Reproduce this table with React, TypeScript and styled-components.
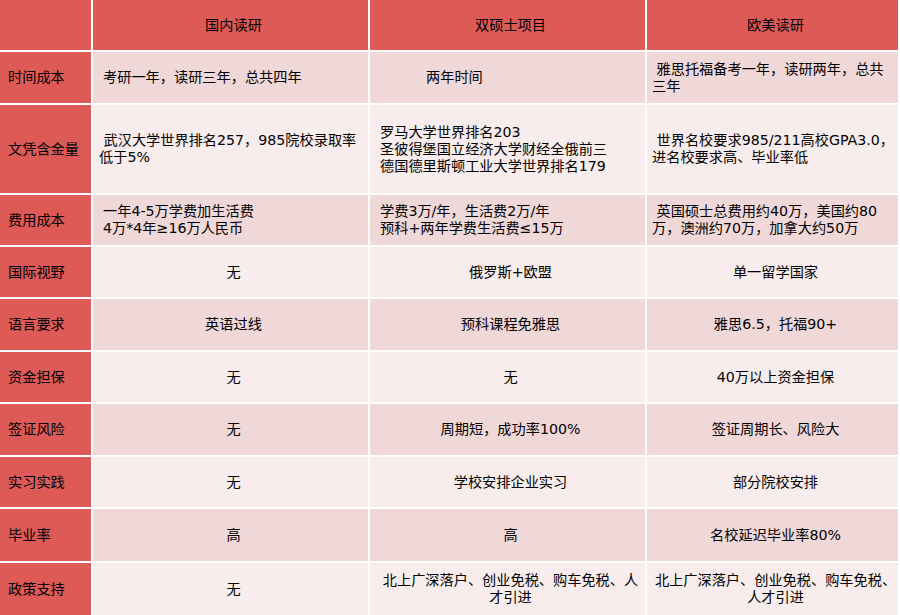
import styled, { createGlobalStyle } from "styled-components";

const Global = createGlobalStyle`
  body {
    margin: 0;
    background: #ffffff;
    font-family: "DejaVu Sans", "Noto Sans CJK SC", sans-serif;
  }
`;

const Table = styled.div`
  display: grid;
  grid-template-columns: 91px 275px 275px 251px;
  grid-template-rows: 50px 51px 88px 50px 50px 51px 50px 51px 50px 52px 52px;
  gap: 2px;
  width: 898px;
  background: #ffffff;
`;

type Tone = "head" | "dark" | "light";

const bg: Record<Tone, string> = {
  head: "#dd5a57",
  dark: "#f0d7d8",
  light: "#f8ecec",
};

const Cell = styled.div<{ $tone: Tone; $center?: boolean; $indent?: number }>`
  display: flex;
  align-items: center;
  justify-content: ${(p) => (p.$center ? "center" : "flex-start")};
  text-align: ${(p) => (p.$center ? "center" : "left")};
  padding: 0 ${(p) => (p.$center ? 2 : 6)}px 0 ${(p) => p.$indent ?? 8}px;
  background: ${(p) => bg[p.$tone]};
  color: #000000;
  font-size: 14.2px;
  line-height: 17px;
  white-space: nowrap;
  box-sizing: border-box;
`;

const Label = styled(Cell)`
  padding-left: 8px;
`;

type Entry = { text: string[]; center?: boolean; indent?: number };

const headers = ["国内读研", "双硕士项目", "欧美读研"];

const rows: { label: string; cells: Entry[] }[] = [
  {
    label: "时间成本",
    cells: [
      { text: ["考研一年，读研三年，总共四年"], indent: 10 },
      { text: ["两年时间"], indent: 56 },
      { text: ["\u00a0雅思托福备考一年，读研两年，总共", "三年"], indent: 5 },
    ],
  },
  {
    label: "文凭含金量",
    cells: [
      { text: ["\u00a0武汉大学世界排名257，985院校录取率", "低于5%"], indent: 6 },
      {
        text: [
          "罗马大学世界排名203",
          "圣彼得堡国立经济大学财经全俄前三",
          "德国德里斯顿工业大学世界排名179",
        ],
        indent: 10,
      },
      { text: ["\u00a0世界名校要求985/211高校GPA3.0，", "进名校要求高、毕业率低"], indent: 5 },
    ],
  },
  {
    label: "费用成本",
    cells: [
      { text: ["一年4-5万学费加生活费", "4万*4年≥16万人民币"], indent: 10 },
      { text: ["学费3万/年，生活费2万/年", "预科+两年学费生活费≤15万"], indent: 10 },
      { text: ["\u00a0英国硕士总费用约40万，美国约80", "万，澳洲约70万，加拿大约50万"], indent: 5 },
    ],
  },
  {
    label: "国际视野",
    cells: [
      { text: ["无"], center: true },
      { text: ["俄罗斯+欧盟"], center: true },
      { text: ["单一留学国家"], center: true },
    ],
  },
  {
    label: "语言要求",
    cells: [
      { text: ["英语过线"], center: true },
      { text: ["预科课程免雅思"], center: true },
      { text: ["雅思6.5，托福90+"], center: true },
    ],
  },
  {
    label: "资金担保",
    cells: [
      { text: ["无"], center: true },
      { text: ["无"], center: true },
      { text: ["40万以上资金担保"], center: true },
    ],
  },
  {
    label: "签证风险",
    cells: [
      { text: ["无"], center: true },
      { text: ["周期短，成功率100%"], center: true },
      { text: ["签证周期长、风险大"], center: true },
    ],
  },
  {
    label: "实习实践",
    cells: [
      { text: ["无"], center: true },
      { text: ["学校安排企业实习"], center: true },
      { text: ["部分院校安排"], center: true },
    ],
  },
  {
    label: "毕业率",
    cells: [
      { text: ["高"], center: true },
      { text: ["高"], center: true },
      { text: ["名校延迟毕业率80%"], center: true },
    ],
  },
  {
    label: "政策支持",
    cells: [
      { text: ["无"], center: true },
      { text: ["北上广深落户、创业免税、购车免税、人", "才引进"], center: true },
      { text: ["北上广深落户、创业免税、购车免税、", "人才引进"], center: true },
    ],
  },
];

const Lines = ({ text }: { text: string[] }) => (
  <div>
    {text.map((t, i) => (
      <div key={i}>{t}</div>
    ))}
  </div>
);

export default function App() {
  return (
    <>
      <Global />
      <Table>
        <Cell $tone="head" />
        {headers.map((h) => (
          <Cell key={h} $tone="head" $center>
            {h}
          </Cell>
        ))}
        {rows.map((row, r) => {
          const tone: Tone = r % 2 === 0 ? "dark" : "light";
          return [
            <Label key={row.label} $tone="head">
              {row.label}
            </Label>,
            ...row.cells.map((c, i) => (
              <Cell key={row.label + i} $tone={tone} $center={c.center} $indent={c.indent}>
                <Lines text={c.text} />
              </Cell>
            )),
          ];
        })}
      </Table>
    </>
  );
}
